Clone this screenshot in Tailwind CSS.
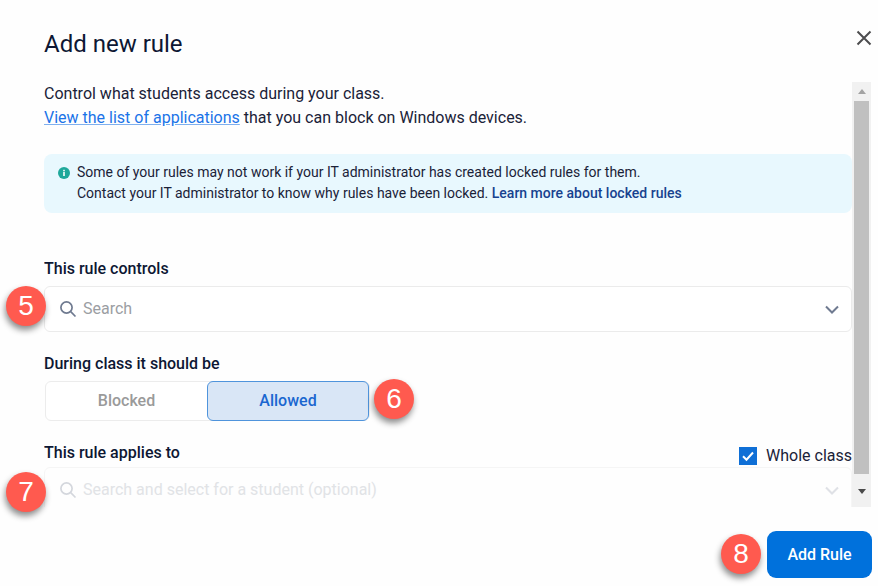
<html lang="en">
<head>
    <meta charset="utf-8"/>
    <title>Add new rule</title>
    <script src="https://cdn.jsdelivr.net/npm/@tailwindcss/browser@4"></script>
</head>
<body class="bg-white">
    <div class="relative w-[878px] h-[586px] overflow-hidden bg-[#fefefe] font-['Roboto',sans-serif] text-[#1a2238]">
        <!-- Header -->
        <div class="flex justify-between items-start pl-[44px] pr-[5px] pt-[28px] h-[82px]">
            <h1 class="text-[24px] leading-[32px] text-[#0d1733]">Add new rule</h1>
            <svg class="mt-[1px]" width="18" height="18" viewBox="0 0 18 18" fill="none" stroke="#4d4d4f" stroke-width="2"><path d="M2.5 2.5 15.5 15.5M15.5 2.5 2.5 15.5"/></svg>
        </div>
        <!-- Scroll area -->
        <div class="flex h-[425px] pl-[44px]">
            <div class="relative w-[808px] h-full overflow-hidden">
                <p class="text-[16px] leading-[24px] pt-[-1px]">Control what students access during your class.<br/><a class="text-[#1a73e8] underline decoration-[#7fb0ef]" href="#">View the list of applications</a> that you can block on Windows devices.</p>
                <div class="flex items-start gap-[7px] mt-[24px] h-[59px] rounded-[8px] bg-[#e8f8fe] pl-[14px] pt-[8px] text-[14px] leading-[21px]">
                    <svg class="mt-[5px] shrink-0" width="12" height="12" viewBox="0 0 12 12"><circle cx="6" cy="6" r="6" fill="#1fa89b"/><rect x="5.2" y="5" width="1.6" height="4" fill="#fff"/><rect x="5.2" y="2.8" width="1.6" height="1.5" fill="#fff"/></svg>
                    <p>Some of your rules may not work if your IT administrator has created locked rules for them.<br/>Contact your IT administrator to know why rules have been locked. <a class="font-medium text-[#17428f]" href="#">Learn more about locked rules</a></p>
                </div>
                <div class="mt-[44px] text-[16px] leading-[24px] font-medium text-[#0d1733]">This rule controls</div>
                <div class="flex items-center justify-between mt-[5px] h-[46px] rounded-[6px] border border-[#ebebeb] bg-white pl-[14px] pr-[12px]">
                    <div class="flex items-center gap-[6px]">
                        <svg width="18" height="18" viewBox="0 0 18 18" fill="none" stroke="#6f7a90" stroke-width="1.7"><circle cx="7.5" cy="7.5" r="5.6"/><path d="M11.7 11.7 16.5 16.5"/></svg>
                        <span class="text-[16px] text-[#9b9ea3]">Search</span>
                    </div>
                    <svg width="14" height="9" viewBox="0 0 14 9" fill="none" stroke="#6f7a90" stroke-width="2"><path d="M1 1.5 7 7.5 13 1.5"/></svg>
                </div>
                <div class="mt-[20px] text-[16px] leading-[24px] font-medium text-[#0d1733]">During class it should be</div>
                <div class="flex mt-[5px] ml-[1px] w-[325px] h-[40px] rounded-[6px] border border-[#ececec] bg-white">
                    <div class="flex flex-1 items-center justify-center text-[16px] font-medium text-[#9a9a9a]">Blocked</div>
                    <div class="flex w-[162px] -my-[1px] items-center justify-center rounded-[6px] border border-[#4f94dc] bg-[#d9e6f6] text-[16px] font-medium text-[#1a66d0]">Allowed</div>
                </div>
                <div class="flex justify-between items-start mt-[20px]">
                    <div class="text-[16px] leading-[24px] font-medium text-[#0d1733]">This rule applies to</div>
                    <div class="flex items-center gap-[9px] mt-[3px]">
                        <svg width="18" height="18" viewBox="0 0 18 18"><rect width="18" height="18" fill="#0f6fd6"/><path d="M4 9.2 7.5 12.7 14 5.5" fill="none" stroke="#fff" stroke-width="2"/></svg>
                        <span class="text-[16px] leading-[24px]">Whole class</span>
                    </div>
                </div>
                <div class="flex items-center justify-between mt-[-1px] h-[46px] rounded-[6px] border border-[#f5f5f5] pl-[14px] pr-[12px]">
                    <div class="flex items-center gap-[6px]">
                        <svg width="18" height="18" viewBox="0 0 18 18" fill="none" stroke="#d4d7dd" stroke-width="1.7"><circle cx="7.5" cy="7.5" r="5.6"/><path d="M11.7 11.7 16.5 16.5"/></svg>
                        <span class="text-[16px] text-[#e1e3e6]">Search and select for a student (optional)</span>
                    </div>
                    <svg width="14" height="9" viewBox="0 0 14 9" fill="none" stroke="#dfe1e6" stroke-width="2"><path d="M1 1.5 7 7.5 13 1.5"/></svg>
                </div>
            </div>
            <!-- Scrollbar -->
            <div class="flex flex-col w-[19px] bg-[#f1f1f1]">
                <div class="flex h-[19px] items-center justify-center">
                    <svg width="8" height="5" viewBox="0 0 8 5"><path d="M0 5 4 0 8 5Z" fill="#a3a3a3"/></svg>
                </div>
                <div class="mx-[2px] h-[373px] bg-[#c0c0c0]"></div>
                <div class="flex flex-1 items-center justify-center pt-[2px]">
                    <svg width="8" height="5" viewBox="0 0 8 5"><path d="M0 0 4 5 8 0Z" fill="#4a4a4a"/></svg>
                </div>
            </div>
        </div>
        <!-- Footer -->
        <div class="flex justify-end pr-[6px] pt-[24px]">
            <button class="w-[105px] h-[47px] rounded-[9px] bg-[#0071dc] text-[16px] font-medium text-white">Add Rule</button>
        </div>
        <!-- Callout badges -->
        <div class="absolute left-[6px] top-[286px] flex size-[40px] items-center justify-center rounded-full bg-[#ff5a4f] font-['Liberation_Sans',sans-serif] text-[28px] text-white shadow-[-1px_4px_6px_rgba(0,0,0,0.45)]">5</div>
        <div class="absolute left-[374px] top-[379px] flex size-[40px] items-center justify-center rounded-full bg-[#ff5a4f] font-['Liberation_Sans',sans-serif] text-[28px] text-white shadow-[-1px_4px_6px_rgba(0,0,0,0.45)]">6</div>
        <div class="absolute left-[6px] top-[472px] flex size-[40px] items-center justify-center rounded-full bg-[#ff5a4f] font-['Liberation_Sans',sans-serif] text-[28px] text-white shadow-[-1px_4px_6px_rgba(0,0,0,0.45)]">7</div>
        <div class="absolute left-[721px] top-[534px] flex size-[40px] items-center justify-center rounded-full bg-[#ff5a4f] font-['Liberation_Sans',sans-serif] text-[28px] text-white shadow-[-1px_4px_6px_rgba(0,0,0,0.45)]">8</div>
    </div>
</body>
</html>
